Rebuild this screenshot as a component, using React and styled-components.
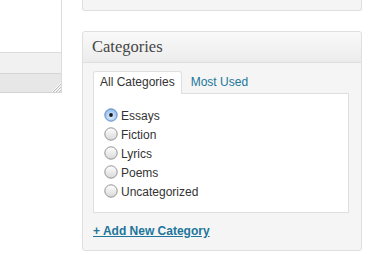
import React from "react";
import styled, { createGlobalStyle } from "styled-components";

const GlobalStyle = createGlobalStyle`
  body {
    margin: 0;
    background: #fff;
    font-family: "Liberation Sans", Arial, sans-serif;
  }
`;

const Page = styled.div`
  display: flex;
  align-items: flex-start;
  width: 372px;
  height: 261px;
  overflow: hidden;
`;

const Editor = styled.div`
  width: 61px;
  border-right: 1px solid #dcdcdc;
  border-bottom: 1px solid #d4d4d4;
  display: flex;
  flex-direction: column;
`;

const EditorBody = styled.div`
  height: 52px;
  background: #fff;
`;

const StatusBar = styled.div`
  height: 20px;
  background: #f1f1f1;
  border-top: 1px solid #dcdcdc;
`;

const ResizeBar = styled.div`
  height: 18px;
  background: #e7e7e7;
  border-top: 1px solid #d6d6d6;
  display: flex;
  justify-content: flex-end;
  align-items: flex-end;
`;

const Sidebar = styled.div`
  margin-left: 20px;
  width: 280px;
  display: flex;
  flex-direction: column;
`;

const PrevBox = styled.div`
  height: 10px;
  background: #f5f5f5;
  border: 1px solid #dfdfdf;
  border-top: none;
  border-radius: 0 0 3px 3px;
`;

const Box = styled.div`
  margin-top: 20px;
  background: #f5f5f5;
  border: 1px solid #dfdfdf;
  border-radius: 3px;
  box-shadow: inset 0 1px 0 #fff;
`;

const BoxHeader = styled.h3`
  margin: 0;
  height: 30px;
  line-height: 30px;
  padding-left: 9px;
  font-family: "Liberation Serif", Georgia, serif;
  font-weight: normal;
  font-size: 16.5px;
  color: #464646;
  background: linear-gradient(#f9f9f9, #ececec);
  border-bottom: 1px solid #dfdfdf;
  border-radius: 3px 3px 0 0;
`;

const BoxBody = styled.div`
  padding: 8px 12px 11px 10px;
`;

const Tabs = styled.div`
  display: flex;
  align-items: flex-start;
`;

const Tab = styled.div`
  position: relative;
  z-index: 1;
  height: 22px;
  line-height: 21px;
  margin-bottom: -1px;
  margin-left: ${(p) => (p.$active ? "0" : "2px")};
  padding: 0 6px;
  font-size: 12px;
  border: 1px solid ${(p) => (p.$active ? "#dfdfdf" : "transparent")};
  border-bottom: none;
  border-radius: 3px 3px 0 0;
  background: ${(p) => (p.$active ? "#fff" : "transparent")};
  color: ${(p) => (p.$active ? "#333" : "#21759b")};
`;

const Panel = styled.div`
  background: #fff;
  border: 1px solid #dfdfdf;
  padding: 12px 10px 11px;
`;

const Row = styled.label`
  display: flex;
  align-items: center;
  height: 19px;
  font-size: 12px;
  color: #333;
`;

const RadioIcon = styled.svg`
  width: 14px;
  height: 14px;
  margin-right: 3px;
  margin-top: -1px;
  flex-shrink: 0;
`;

const AddLink = styled.a`
  display: block;
  margin-top: 10px;
  line-height: 16px;
  font-size: 12px;
  font-weight: bold;
  color: #21759b;
  text-decoration: underline;
`;

const Radio = ({ checked }) => (
  <RadioIcon viewBox="0 0 14 14">
    <defs>
      <linearGradient id="off" x1="0" y1="0" x2="0" y2="1">
        <stop offset="0" stopColor="#ffffff" />
        <stop offset="1" stopColor="#d8d8d8" />
      </linearGradient>
      <radialGradient id="on" cx="0.5" cy="0.6" r="0.6">
        <stop offset="0" stopColor="#e8f2fd" />
        <stop offset="1" stopColor="#86b6ec" />
      </radialGradient>
    </defs>
    <circle
      cx="7"
      cy="7"
      r="6.2"
      fill={checked ? "url(#on)" : "url(#off)"}
      stroke={checked ? "#5a86c0" : "#888"}
      strokeWidth="0.9"
    />
    {checked && <circle cx="7" cy="7" r="1.9" fill="#1b1b1b" />}
  </RadioIcon>
);

const Grip = () => (
  <svg width="10" height="10" viewBox="0 0 10 10">
    <path d="M1 10 L10 1 M4 10 L10 4 M7 10 L10 7" stroke="#fff" strokeWidth="1" />
    <path d="M2 10 L10 2 M5 10 L10 5 M8 10 L10 8" stroke="#bdbdbd" strokeWidth="1" />
  </svg>
);

const categories = ["Essays", "Fiction", "Lyrics", "Poems", "Uncategorized"];

const App = () => {
  return (
    <Page>
      <GlobalStyle />
      <Editor>
        <EditorBody />
        <StatusBar />
        <ResizeBar>
          <Grip />
        </ResizeBar>
      </Editor>
      <Sidebar>
        <PrevBox />
        <Box>
          <BoxHeader>Categories</BoxHeader>
          <BoxBody>
            <Tabs>
              <Tab $active>All Categories</Tab>
              <Tab>Most Used</Tab>
            </Tabs>
            <Panel>
              {categories.map((c, i) => (
                <Row key={c}>
                  <Radio checked={i === 0} />
                  {c}
                </Row>
              ))}
            </Panel>
            <AddLink href="#">+ Add New Category</AddLink>
          </BoxBody>
        </Box>
      </Sidebar>
    </Page>
  );
};

export default App;
